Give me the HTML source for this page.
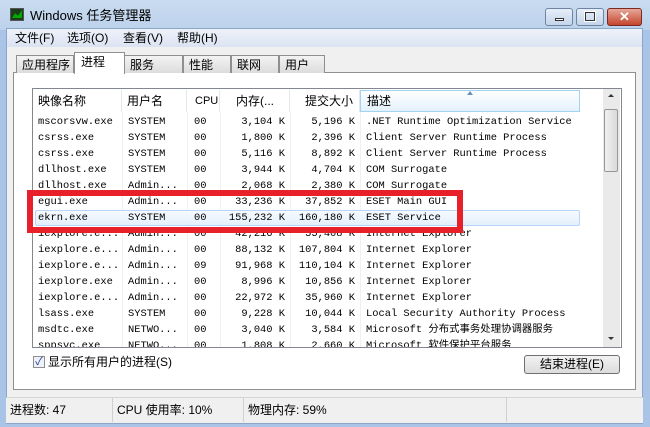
<!DOCTYPE html>
<html><head><meta charset="utf-8"><style>
*{margin:0;padding:0;box-sizing:border-box}
body{width:650px;height:427px;overflow:hidden;background:#a9c4e6;font-family:"Liberation Sans","Noto Sans CJK SC",sans-serif;font-size:12px;color:#000;position:relative}
.abs{position:absolute}
#title{left:0;top:0;width:650px;height:30px;background:linear-gradient(#c9dbef,#bcd2ec)}
#frame{left:6px;top:28px;width:637px;height:396px;background:#f0f0f0;border:1px solid #8aa6c8}
#menu{left:7px;top:29px;width:635px;height:18px;background:linear-gradient(#eef2fa,#dbe3f2)}
.m{top:30px;font-size:12px;line-height:16px}
.tab{top:55px;height:18px;border:1px solid #8e8f8f;border-bottom:none;background:linear-gradient(#f3f3f3,#dcdcdc);font-size:12px;line-height:16px;padding:1px 0 0 5px}
#panel{left:13px;top:72px;width:623px;height:318px;background:#fff;border:1px solid #8e8f8f}
#list{left:32px;top:88px;width:590px;height:260px;border:1px solid #828790;background:#fff;overflow:hidden}
.h{top:90px;height:22px;font-size:12px;line-height:22px;border-right:1px solid #e3e8ee;background:#fff}
.r{font-family:"Liberation Mono","Noto Sans CJK SC",monospace;font-size:10.4px;height:16px;line-height:16px}
.c{position:absolute;white-space:nowrap;overflow:hidden}
.vl{top:112px;width:1px;height:235px;background:#edf0f4}
#status{left:6px;top:397px;width:637px;height:26px;background:#f0f0f0;border-top:1px solid #d5d5d5}
.sep{top:398px;width:1px;height:24px;background:#d0d0d0}
.btn{top:8px;height:18px;border:1px solid #6d84a3;border-radius:3px;background:linear-gradient(#e6eef8,#c5d5ea)}
.st{top:398px;line-height:24px}
</style></head><body>
<div id="title" class="abs"></div>
<div class="abs" style="left:10px;top:8px;width:14px;height:13px;background:#1c3c1c;border:1px solid #555"></div>
<div class="abs" style="left:12px;top:10px;width:10px;height:8px;background:#0a0;clip-path:polygon(0 100%,30% 40%,60% 70%,100% 0,100% 100%)"></div>
<div class="abs" style="left:30px;top:7px;font-size:13px;line-height:18px">Windows 任务管理器</div>
<div class="abs btn" style="left:545px;width:28px"><div class="abs" style="left:9px;top:9px;width:9px;height:3px;background:#fff;border:1px solid #333"></div></div>
<div class="abs btn" style="left:576px;width:28px"><div class="abs" style="left:8px;top:3px;width:10px;height:9px;border:1px solid #333;outline:1px solid #fff"></div></div>
<div class="abs btn" style="left:607px;width:35px;background:linear-gradient(#e8a799,#c4452c);border-color:#7a2a20;color:#fff;font-weight:bold;font-size:13px;text-align:center;line-height:15px">✕</div>
<div id="frame" class="abs"></div>
<div id="menu" class="abs"></div>
<div class="abs m" style="left:15px">文件(F)</div>
<div class="abs m" style="left:67px">选项(O)</div>
<div class="abs m" style="left:123px">查看(V)</div>
<div class="abs m" style="left:177px">帮助(H)</div>
<div id="panel" class="abs"></div>
<div class="abs tab" style="left:16px;width:58px">应用程序</div>
<div class="abs tab" style="left:124px;width:59px">服务</div>
<div class="abs tab" style="left:183px;width:48px">性能</div>
<div class="abs tab" style="left:231px;width:48px">联网</div>
<div class="abs tab" style="left:279px;width:46px">用户</div>
<div class="abs" style="left:74px;top:52px;width:51px;height:22px;background:#fff;border:1px solid #8e8f8f;border-bottom:none;padding:1px 0 0 6px;font-size:12px;line-height:16px">进程</div>
<div id="list" class="abs"></div>
<div class="abs h" style="left:33px;width:89px;padding-left:5px">映像名称</div>
<div class="abs h" style="left:122px;width:65px;padding-left:5px">用户名</div>
<div class="abs h" style="left:187px;width:33px;padding-left:8px;font-size:11px">CPU</div>
<div class="abs h" style="left:220px;width:70px;padding-left:16px">内存(...</div>
<div class="abs h" style="left:290px;width:70px;padding-left:15px">提交大小</div>
<div class="abs h" style="left:360px;width:220px;padding-left:6px;line-height:20px;background:linear-gradient(#fff,#e3f1fb);border:1px solid #9fd4f3">描述</div>
<div class="abs" style="left:467px;top:91px;width:0;height:0;border-left:3px solid transparent;border-right:3px solid transparent;border-bottom:4px solid #6a8fb8"></div>
<div class="abs vl" style="left:122px"></div><div class="abs vl" style="left:187px"></div><div class="abs vl" style="left:220px"></div><div class="abs vl" style="left:290px"></div><div class="abs vl" style="left:360px"></div>
<div class="abs" style="left:603px;top:89px;width:17px;height:258px;background:#eaeaea"></div>
<div class="abs" style="left:608px;top:94px;width:0;height:0;border-left:3px solid transparent;border-right:3px solid transparent;border-bottom:3px solid #333"></div>
<div class="abs" style="left:604px;top:109px;width:14px;height:63px;border:1px solid #979797;border-radius:2px;background:linear-gradient(90deg,#f0f0f0,#dadada)"></div>
<div class="abs" style="left:608px;top:337px;width:0;height:0;border-left:3px solid transparent;border-right:3px solid transparent;border-top:3px solid #333"></div>
<div class="abs" style="left:35px;top:210px;width:545px;height:16px;border:1px solid #b8d6fb;border-radius:2px;background:linear-gradient(#f6fafe,#e4effc)"></div>
<div class="abs" style="left:33px;top:114px;width:570px;height:233px;overflow:hidden">
<div class="r" style="position:relative">
<script>
var d=[["mscorsvw.exe","SYSTEM","00","3,104 K","5,196 K",".NET Runtime Optimization Service"],
["csrss.exe","SYSTEM","00","1,800 K","2,396 K","Client Server Runtime Process"],
["csrss.exe","SYSTEM","00","5,116 K","8,892 K","Client Server Runtime Process"],
["dllhost.exe","SYSTEM","00","3,944 K","4,704 K","COM Surrogate"],
["dllhost.exe","Admin...","00","2,068 K","2,380 K","COM Surrogate"],
["egui.exe","Admin...","00","33,236 K","37,852 K","ESET Main GUI"],
["ekrn.exe","SYSTEM","00","155,232 K","160,180 K","ESET Service"],
["iexplore.e...","Admin...","00","42,216 K","55,408 K","Internet Explorer"],
["iexplore.e...","Admin...","00","88,132 K","107,804 K","Internet Explorer"],
["iexplore.e...","Admin...","09","91,968 K","110,104 K","Internet Explorer"],
["iexplore.exe","Admin...","00","8,996 K","10,856 K","Internet Explorer"],
["iexplore.e...","Admin...","00","22,972 K","35,960 K","Internet Explorer"],
["lsass.exe","SYSTEM","00","9,228 K","10,044 K","Local Security Authority Process"],
["msdtc.exe","NETWO...","00","3,040 K","3,584 K","Microsoft 分布式事务处理协调器服务"],
["sppsvc.exe","NETWO...","00","1,808 K","2,660 K","Microsoft 软件保护平台服务"]];
var h="";d.forEach(function(r,i){var t=i*16;
h+='<div class="c" style="top:'+t+'px;left:5px">'+r[0]+'</div><div class="c" style="top:'+t+'px;left:95px">'+r[1]+'</div><div class="c" style="top:'+t+'px;left:161px">'+r[2]+'</div><div class="c" style="top:'+t+'px;left:187px;width:65px;text-align:right">'+r[3]+'</div><div class="c" style="top:'+t+'px;left:257px;width:65px;text-align:right">'+r[4]+'</div><div class="c" style="top:'+t+'px;left:333px">'+r[5]+'</div>';});
document.write(h);
</script>
</div></div>
<div class="abs" style="left:27px;top:190px;width:436px;height:43px;border:6px solid #e8202a"></div>
<div class="abs" style="left:33px;top:356px;width:12px;height:12px;border:1px solid #8f8f8f;background:#eef3fb;color:#27408b;font-size:11px;line-height:10px;text-align:center">✓</div>
<div class="abs" style="left:48px;top:354px;font-size:12px;line-height:16px">显示所有用户的进程(S)</div>
<div class="abs" style="left:524px;top:355px;width:96px;height:19px;border:1px solid #707070;border-radius:3px;background:linear-gradient(#f2f2f2,#dcdcdc);text-align:center;font-size:12px;line-height:17px">结束进程(E)</div>
<div id="status" class="abs"></div>
<div class="abs sep" style="left:112px"></div><div class="abs sep" style="left:243px"></div><div class="abs sep" style="left:506px"></div>
<div class="abs st" style="left:10px">进程数: 47</div>
<div class="abs st" style="left:117px">CPU 使用率: 10%</div>
<div class="abs st" style="left:248px">物理内存: 59%</div>
</body></html>
